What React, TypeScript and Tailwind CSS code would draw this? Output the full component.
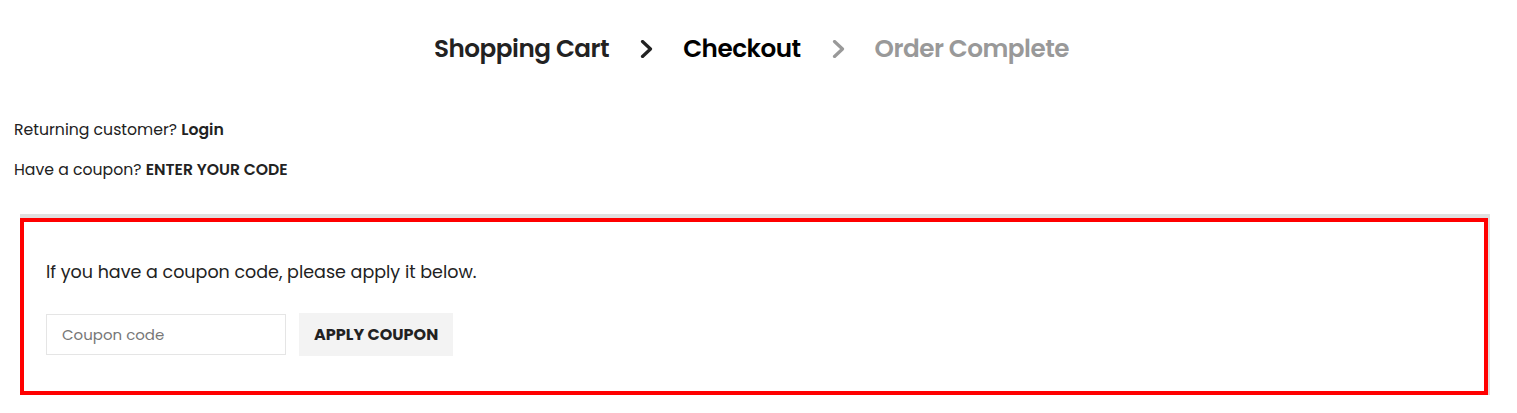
import React from "react";

const font = { fontFamily: "Poppins, Inter, 'Noto Sans', sans-serif" };

function Chevron({ color }: { color: string }) {
  return (
    <svg width="14" height="18" viewBox="0 0 14 18" fill="none" className={color}>
      <path d="M2.5 1.5l8 7.5-8 7.5" stroke="currentColor" strokeWidth="3.2" strokeLinecap="round" strokeLinejoin="round" />
    </svg>
  );
}

export default function App() {
  return (
    <div className="bg-white w-[1517px] h-[413px] text-[#222]" style={font}>
      <div className="flex items-center justify-center pt-[34px] pr-[14px] h-[63px]">
        <span className="text-[24.7px] font-semibold tracking-[-0.5px] text-[#222] leading-[30px]">Shopping Cart</span>
        <span className="ml-[31px] mr-[29px] flex items-center"><Chevron color="text-[#222]" /></span>
        <span className="text-[24.7px] font-semibold tracking-[-0.5px] text-black leading-[30px]">Checkout</span>
        <span className="ml-[31px] mr-[29px] flex items-center"><Chevron color="text-[#999]" /></span>
        <span className="text-[24.7px] font-semibold tracking-[-0.5px] text-[#999] leading-[30px]">Order Complete</span>
      </div>

      <div className="pl-[14px] pt-[56px] text-[15.7px] leading-[22px]">
        <p>
          Returning customer? <a className="font-semibold text-[#222]">Login</a>
        </p>
        <p className="mt-[18px]">
          Have a coupon? <a className="font-semibold uppercase text-[#222]">Enter your code</a>
        </p>
      </div>

      <div className="mx-[20px] mt-[33px] w-[1470px] border-t-[4px] border-r-[2px] border-[#e0e0e0]">
        <div className="border-[4px] border-[#ff0000] w-[1468px] h-[177px] pl-[22px] pt-[37px]">
          <p className="text-[17.5px] leading-[26px] text-[#222]">If you have a coupon code, please apply it below.</p>
          <div className="mt-[28px] flex items-center gap-[13px]">
            <input
              placeholder="Coupon code"
              className="w-[240px] h-[41px] border border-[#e5e5e5] px-[15px] text-[15px] placeholder:text-[#777] outline-none"
              style={font}
            />
            <button className="h-[43px] px-[15px] bg-[#f3f3f3] text-[16px] font-bold text-[#222] uppercase">
              Apply coupon
            </button>
          </div>
        </div>
      </div>
    </div>
  );
}
